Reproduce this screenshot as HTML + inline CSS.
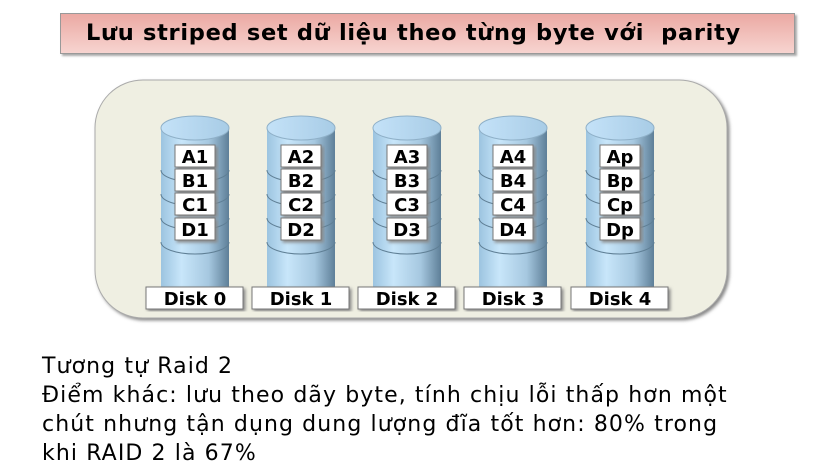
<!DOCTYPE html>
<html><head><meta charset="utf-8"><style>
body{margin:0;width:824px;height:473px;background:#fff;overflow:hidden;position:relative;font-family:"DejaVu Sans","Liberation Sans",sans-serif}
.title{position:absolute;left:60px;top:13px;width:733px;height:39px;background:linear-gradient(#eba9a3,#f7d4d0);border:1px solid #999;box-shadow:2px 2px 2px #aaa;font-weight:bold;font-size:22.5px;letter-spacing:0.7px;line-height:39px;color:#000;white-space:nowrap}
.title span{position:absolute;left:25px;top:0}
.txt{position:absolute;left:42px;top:352px;font-size:22px;letter-spacing:1.1px;line-height:29px;color:#000;white-space:nowrap}
</style></head><body>
<div class="title"><span>Lưu striped set dữ liệu theo từng byte với&nbsp; parity</span></div>
<svg style="position:absolute;left:0;top:0" width="824" height="473">
<defs>
<linearGradient id="g" x1="0" x2="1"><stop offset="0" stop-color="#9cc4e0"/><stop offset="0.3" stop-color="#c8e6fa"/><stop offset="0.7" stop-color="#a6c8e0"/><stop offset="1" stop-color="#5e7f98"/></linearGradient>
<linearGradient id="t" x1="0" x2="1"><stop offset="0" stop-color="#c4e2f8"/><stop offset="1" stop-color="#a8cce6"/></linearGradient>
<filter id="s"><feDropShadow dx="2" dy="2" stdDeviation="1.5" flood-color="#888"/></filter>
</defs>
<rect x="95" y="80" width="632" height="238" rx="48" fill="#efefe2" stroke="#aaa" filter="url(#s)"/>
<g font-family="DejaVu Sans,Liberation Sans,sans-serif" font-weight="bold" text-anchor="middle">
<g transform="translate(195,0)"><path d="M-34 128 V287 A34 12 0 0 0 34 287 V128 Z" fill="url(#g)"/><path d="M-34 170 A34 12 0 0 0 34 170 M-34 194 A34 12 0 0 0 34 194 M-34 218 A34 12 0 0 0 34 218 M-34 242 A34 12 0 0 0 34 242" fill="none" stroke="#5f7f95"/><ellipse cx="0" cy="128" rx="34" ry="12" fill="url(#t)" stroke="#8fb0c8"/>
<g fill="#fff" stroke="#777" filter="url(#s)"><rect x="-20" y="145" width="40" height="22"/><rect x="-20" y="169" width="40" height="22"/><rect x="-20" y="193" width="40" height="22"/><rect x="-20" y="218" width="40" height="22"/></g>
<g font-size="18"><text y="163">A1</text><text y="187">B1</text><text y="211">C1</text><text y="236">D1</text></g></g>
<g transform="translate(301,0)"><path d="M-34 128 V287 A34 12 0 0 0 34 287 V128 Z" fill="url(#g)"/><path d="M-34 170 A34 12 0 0 0 34 170 M-34 194 A34 12 0 0 0 34 194 M-34 218 A34 12 0 0 0 34 218 M-34 242 A34 12 0 0 0 34 242" fill="none" stroke="#5f7f95"/><ellipse cx="0" cy="128" rx="34" ry="12" fill="url(#t)" stroke="#8fb0c8"/>
<g fill="#fff" stroke="#777" filter="url(#s)"><rect x="-20" y="145" width="40" height="22"/><rect x="-20" y="169" width="40" height="22"/><rect x="-20" y="193" width="40" height="22"/><rect x="-20" y="218" width="40" height="22"/></g>
<g font-size="18"><text y="163">A2</text><text y="187">B2</text><text y="211">C2</text><text y="236">D2</text></g></g>
<g transform="translate(407,0)"><path d="M-34 128 V287 A34 12 0 0 0 34 287 V128 Z" fill="url(#g)"/><path d="M-34 170 A34 12 0 0 0 34 170 M-34 194 A34 12 0 0 0 34 194 M-34 218 A34 12 0 0 0 34 218 M-34 242 A34 12 0 0 0 34 242" fill="none" stroke="#5f7f95"/><ellipse cx="0" cy="128" rx="34" ry="12" fill="url(#t)" stroke="#8fb0c8"/>
<g fill="#fff" stroke="#777" filter="url(#s)"><rect x="-20" y="145" width="40" height="22"/><rect x="-20" y="169" width="40" height="22"/><rect x="-20" y="193" width="40" height="22"/><rect x="-20" y="218" width="40" height="22"/></g>
<g font-size="18"><text y="163">A3</text><text y="187">B3</text><text y="211">C3</text><text y="236">D3</text></g></g>
<g transform="translate(513,0)"><path d="M-34 128 V287 A34 12 0 0 0 34 287 V128 Z" fill="url(#g)"/><path d="M-34 170 A34 12 0 0 0 34 170 M-34 194 A34 12 0 0 0 34 194 M-34 218 A34 12 0 0 0 34 218 M-34 242 A34 12 0 0 0 34 242" fill="none" stroke="#5f7f95"/><ellipse cx="0" cy="128" rx="34" ry="12" fill="url(#t)" stroke="#8fb0c8"/>
<g fill="#fff" stroke="#777" filter="url(#s)"><rect x="-20" y="145" width="40" height="22"/><rect x="-20" y="169" width="40" height="22"/><rect x="-20" y="193" width="40" height="22"/><rect x="-20" y="218" width="40" height="22"/></g>
<g font-size="18"><text y="163">A4</text><text y="187">B4</text><text y="211">C4</text><text y="236">D4</text></g></g>
<g transform="translate(620,0)"><path d="M-34 128 V287 A34 12 0 0 0 34 287 V128 Z" fill="url(#g)"/><path d="M-34 170 A34 12 0 0 0 34 170 M-34 194 A34 12 0 0 0 34 194 M-34 218 A34 12 0 0 0 34 218 M-34 242 A34 12 0 0 0 34 242" fill="none" stroke="#5f7f95"/><ellipse cx="0" cy="128" rx="34" ry="12" fill="url(#t)" stroke="#8fb0c8"/>
<g fill="#fff" stroke="#777" filter="url(#s)"><rect x="-20" y="145" width="40" height="22"/><rect x="-20" y="169" width="40" height="22"/><rect x="-20" y="193" width="40" height="22"/><rect x="-20" y="218" width="40" height="22"/></g>
<g font-size="18"><text y="163">Ap</text><text y="187">Bp</text><text y="211">Cp</text><text y="236">Dp</text></g></g>
<g fill="#fff" stroke="#777" filter="url(#s)">
<rect x="146" y="287" width="97" height="22"/><rect x="252" y="287" width="97" height="22"/><rect x="358" y="287" width="97" height="22"/><rect x="464" y="287" width="97" height="22"/><rect x="571" y="287" width="97" height="22"/></g>
<g font-size="18"><text x="195" y="305">Disk 0</text><text x="301" y="305">Disk 1</text><text x="407" y="305">Disk 2</text><text x="513" y="305">Disk 3</text><text x="620" y="305">Disk 4</text></g>
</g>
</svg>
<div class="txt">Tương tự Raid 2<br>Điểm khác: lưu theo dãy byte, tính chịu lỗi thấp hơn một<br>chút nhưng tận dụng dung lượng đĩa tốt hơn: 80% trong<br>khi RAID 2 là 67%</div>
</body></html>
